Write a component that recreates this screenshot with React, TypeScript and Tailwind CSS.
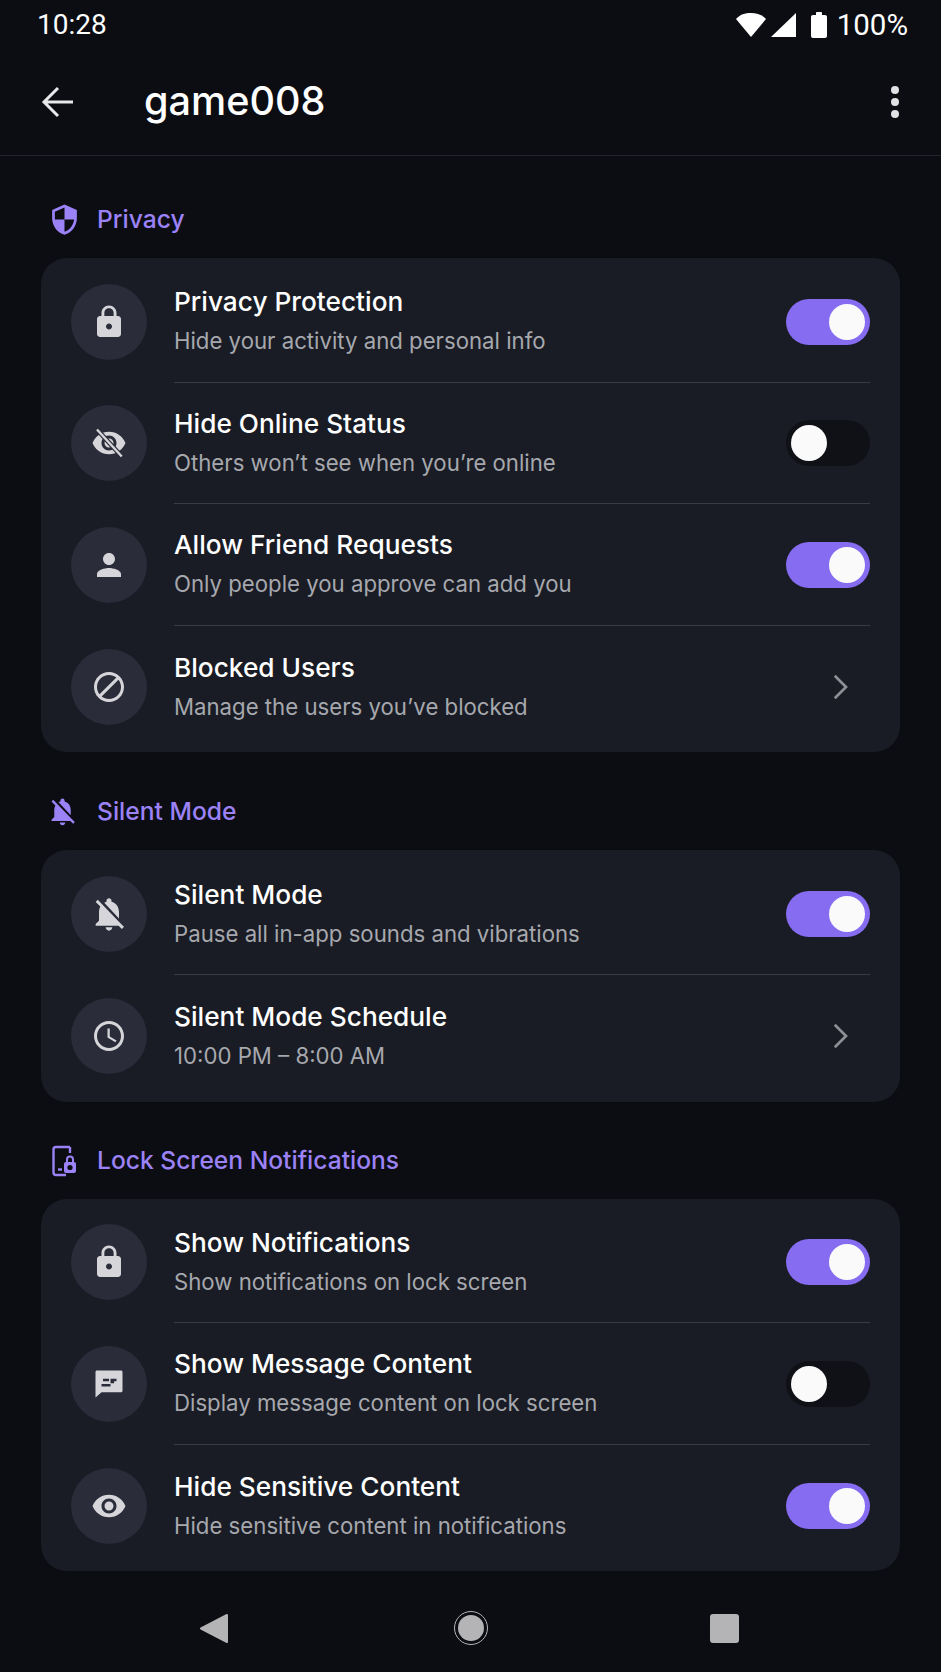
import React from 'react';

// Material icon paths (24x24 viewBox)
const PATHS = {
    lock: 'M18 8h-1V6c0-2.76-2.24-5-5-5S7 3.24 7 6v2H6c-1.1 0-2 .9-2 2v10c0 1.1.9 2 2 2h12c1.1 0 2-.9 2-2V10c0-1.1-.9-2-2-2zm-6 9c-1.1 0-2-.9-2-2s.9-2 2-2 2 .9 2 2-.9 2-2 2zm3.1-9H8.9V6c0-1.71 1.39-3.1 3.1-3.1 1.71 0 3.1 1.39 3.1 3.1v2z',
    eye: 'M12 4.5C7 4.5 2.73 7.61 1 12c1.73 4.39 6 7.5 11 7.5s9.27-3.11 11-7.5c-1.73-4.39-6-7.5-11-7.5zM12 17c-2.76 0-5-2.24-5-5s2.24-5 5-5 5 2.24 5 5-2.24 5-5 5zm0-8c-1.66 0-3 1.34-3 3s1.34 3 3 3 3-1.34 3-3-1.34-3-3-3z',
    person: 'M12 12c2.21 0 4-1.79 4-4s-1.79-4-4-4-4 1.79-4 4 1.79 4 4 4zm0 2c-2.67 0-8 1.34-8 4v2h16v-2c0-2.66-5.33-4-8-4z',
    block: 'M12 2C6.48 2 2 6.48 2 12s4.48 10 10 10 10-4.48 10-10S17.52 2 12 2zM4 12c0-4.42 3.58-8 8-8 1.85 0 3.55.63 4.9 1.69L5.69 16.9C4.63 15.55 4 13.85 4 12zm8 8c-1.85 0-3.55-.63-4.9-1.69L18.31 7.1C19.37 8.45 20 10.15 20 12c0 4.42-3.58 8-8 8z',
    bellOff: 'M20 18.69L7.84 6.14 5.27 3.49 4 4.76l2.8 2.8v.01c-.52.99-.8 2.16-.8 3.42v5l-2 2v1h13.73l2 2L21 19.72l-1-1.03zM12 22c1.11 0 2-.89 2-2h-4c0 1.11.89 2 2 2zm6-7.32V11c0-3.08-1.64-5.64-4.5-6.32V4c0-.83-.67-1.5-1.5-1.5s-1.5.67-1.5 1.5v.68c-.15.03-.29.08-.42.12-.1.03-.2.07-.3.11h-.01c-.2.08-.4.17-.59.27-.01 0-.01 0-.02.01L18 14.68z',
    clock: 'M11.99 2C6.47 2 2 6.48 2 12s4.47 10 9.99 10C17.52 22 22 17.52 22 12S17.52 2 11.99 2zM12 20c-4.42 0-8-3.58-8-8s3.58-8 8-8 8 3.58 8 8-3.58 8-8 8zm.5-13H11v6l5.25 3.15.75-1.23-4.5-2.67z',
    shield: 'M12 1L3 5v6c0 5.55 3.84 10.74 9 12 5.16-1.26 9-6.45 9-12V5l-9-4zm0 10.99h7c-.53 4.12-3.28 7.79-7 8.94V12H5V6.3l7-3.11v8.8z',
};

type IconName = keyof typeof PATHS | 'eyeOff' | 'chat';

const RowIcon = ({ name }: { name: IconName }) => {
    if (name === 'eyeOff') {
        return (
            <svg viewBox="0 0 24 24" className="w-[36px] h-[36px] text-[#d6d6da]" fill="currentColor">
                <path d={PATHS.eye} />
                <path d="M4 3 L20.5 21" stroke="#2a2c3a" strokeWidth="3.2" />
                <path d="M4 3 L20.5 21" stroke="currentColor" strokeWidth="1.6" />
            </svg>
        );
    }
    if (name === 'chat') {
        return (
            <svg viewBox="0 0 24 24" className="w-[36px] h-[36px] text-[#d6d6da]" fill="currentColor">
                <path d="M20 3H4c-.6 0-1 .4-1 1v17l4-3.5h13c.6 0 1-.4 1-1V4c0-.6-.4-1-1-1z" />
                <path d="M8 8.5h4v1.6H8zM13 8.5h4v1.6h-1.6v1.4H13zM7 12h6v1.6H7z" fill="#2a2c3a" />
            </svg>
        );
    }
    return (
        <svg viewBox="0 0 24 24" className={`${name === 'bellOff' ? 'w-[40px] h-[40px]' : 'w-[36px] h-[36px]'} text-[#d6d6da]`} fill="currentColor">
            <path d={PATHS[name]} />
        </svg>
    );
};

const Toggle = ({ on }: { on: boolean }) => (
    <div className={`w-[84px] h-[46px] rounded-full flex items-center px-[5px] shrink-0 ${on ? 'bg-[#866cf0] justify-end' : 'bg-[#101116] justify-start'}`}>
        <div className="w-[36px] h-[36px] rounded-full bg-[#fafafa]" />
    </div>
);

const Chevron = () => (
    <svg viewBox="0 0 24 24" className="w-[36px] h-[36px] mr-[12px] shrink-0 text-[#8e9097]" fill="none" stroke="currentColor" strokeWidth="1.8">
        <path d="M8.5 4.5 L16 12 L8.5 19.5" />
    </svg>
);

interface RowData {
    icon: IconName;
    title: string;
    sub: string;
    toggle?: boolean;
}

const Row = ({ row, last }: { row: RowData; last: boolean }) => (
    <div className="flex items-center h-[121.6px] pl-[30px] pr-[30px]">
        <div className="w-[76px] h-[76px] rounded-full bg-[#2a2c3a] flex items-center justify-center shrink-0">
            <RowIcon name={row.icon} />
        </div>
        <div className={`flex-1 h-full ml-[27px] pt-[1px] flex items-center justify-between ${last ? '' : 'border-b border-[#3a3c45]'}`}>
            <div className="flex flex-col pb-[2px]">
                <div className="text-[26.25px] leading-[36px] font-medium text-white">{row.title}</div>
                <div className="text-[22.2px] leading-[32px] mt-[5px] text-[#a6a8ae]">{row.sub}</div>
            </div>
            {row.toggle === undefined ? <Chevron /> : <Toggle on={row.toggle} />}
        </div>
    </div>
);

const Section = ({ icon, title, rows, className, head, bottom }: { icon: React.ReactNode; title: string; rows: RowData[]; className: string; head: string; bottom: string }) => (
    <section className={className}>
        <div className={`flex items-center h-[40px] ${head}`}>
            <div className="w-[56px] pl-[8px] flex items-center">{icon}</div>
            <div className="text-[24.6px] font-medium text-[#9b82f6]">{title}</div>
        </div>
        <div className={`bg-[#191c24] rounded-[26px] pt-[3px] ${bottom}`}>
            {rows.map((row, i) => (
                <Row key={row.title} row={row} last={i === rows.length - 1} />
            ))}
        </div>
    </section>
);

const PRIVACY: RowData[] = [
    { icon: 'lock', title: 'Privacy Protection', sub: 'Hide your activity and personal info', toggle: true },
    { icon: 'eyeOff', title: 'Hide Online Status', sub: 'Others won’t see when you’re online', toggle: false },
    { icon: 'person', title: 'Allow Friend Requests', sub: 'Only people you approve can add you', toggle: true },
    { icon: 'block', title: 'Blocked Users', sub: 'Manage the users you’ve blocked' },
];

const SILENT: RowData[] = [
    { icon: 'bellOff', title: 'Silent Mode', sub: 'Pause all in-app sounds and vibrations', toggle: true },
    { icon: 'clock', title: 'Silent Mode Schedule', sub: '10:00 PM – 8:00 AM' },
];

const LOCK: RowData[] = [
    { icon: 'lock', title: 'Show Notifications', sub: 'Show notifications on lock screen', toggle: true },
    { icon: 'chat', title: 'Show Message Content', sub: 'Display message content on lock screen', toggle: false },
    { icon: 'eye', title: 'Hide Sensitive Content', sub: 'Hide sensitive content in notifications', toggle: true },
];

export default function App() {
    return (
        <div className="w-[941px] h-[1672px] bg-[#0b0d12] flex flex-col overflow-hidden font-['Inter',sans-serif]">
            {/* status bar */}
            <div className="h-[50px] flex items-center justify-between pl-[37px] pr-[33px] text-white text-[28px] font-['Roboto',sans-serif]">
                <span>10:28</span>
                <div className="flex items-center">
                    <svg viewBox="0 0 30 24" className="w-[30px] h-[24px]" fill="white">
                        <path d="M0 6 C4 1.5 9 0 15 0 C21 0 26 1.5 30 6 L15 24 Z" />
                    </svg>
                    <svg viewBox="0 0 25 24" className="w-[25px] h-[24px] ml-[5px]" fill="white">
                        <path d="M25 0 V24 H0 Z" />
                    </svg>
                    <svg viewBox="0 0 16 26" className="w-[16px] h-[26px] ml-[15px]" fill="white">
                        <path d="M5 3 V1 C5 .4 5.4 0 6 0 H10 C10.6 0 11 .4 11 1 V3 H14 C15.2 3 16 3.8 16 5 V24 C16 25.2 15.2 26 14 26 H2 C.8 26 0 25.2 0 24 V5 C0 3.8 .8 3 2 3 Z" />
                    </svg>
                    <span className="ml-[10px] text-[29.5px]">100%</span>
                </div>
            </div>

            {/* app bar */}
            <div className="h-[106px] flex items-center border-b border-[#23252c] pl-[41px] pr-[42px] pb-[2px]">
                <svg viewBox="0 0 34 34" className="w-[34px] h-[34px] text-[#e8e8ea]" fill="none" stroke="currentColor" strokeWidth="3">
                    <path d="M32 17 H4 M17 3 L3 17 L17 31" />
                </svg>
                <div className="ml-[69px] text-[39.6px] font-medium text-white flex-1">game008</div>
                <div className="flex flex-col gap-[4px]">
                    <div className="w-[8px] h-[8px] rounded-full bg-[#e2e2e4]" />
                    <div className="w-[8px] h-[8px] rounded-full bg-[#e2e2e4]" />
                    <div className="w-[8px] h-[8px] rounded-full bg-[#e2e2e4]" />
                </div>
            </div>

            <main className="flex-1 px-[41px]">
                <Section
                    className="mt-[43px]"
                    head="mb-[19px]"
                    bottom="pb-[5px]"
                    title="Privacy"
                    rows={PRIVACY}
                    icon={
                        <svg viewBox="0 0 24 24" className="w-[33px] h-[33px] -ml-[1px] text-[#9b82f6]" fill="currentColor">
                            <path d={PATHS.shield} />
                        </svg>
                    }
                />
                <Section
                    className="mt-[39px]"
                    head="mb-[19px]"
                    bottom="pb-[5px]"
                    title="Silent Mode"
                    rows={SILENT}
                    icon={
                        <svg viewBox="0 0 24 24" className="w-[33px] h-[33px] -ml-[3px] text-[#9b82f6]" fill="currentColor">
                            <path d={PATHS.bellOff} />
                        </svg>
                    }
                />
                <Section
                    className="mt-[39px]"
                    head="mb-[18px]"
                    bottom="pb-[4.5px]"
                    title="Lock Screen Notifications"
                    rows={LOCK}
                    icon={
                        <svg viewBox="0 0 28 32" className="w-[28px] h-[32px] ml-[2px] text-[#9b82f6]" fill="none" stroke="currentColor" strokeWidth="2.4">
                            <path d="M19 2 H5 C3.5 2 2.5 3 2.5 4.5 V27.5 C2.5 29 3.5 30 5 30 H15" />
                            <path d="M19 2 V8" />
                            <path d="M7 24.5 H11" />
                            <rect x="13" y="17" width="12" height="11" rx="2" fill="currentColor" stroke="none" />
                            <path d="M16 17 V14.5 C16 10.5 22 10.5 22 14.5 V17" strokeWidth="2" />
                            <circle cx="19" cy="22.5" r="2.6" fill="#0b0d12" stroke="none" />
                        </svg>
                    }
                />
            </main>

            {/* nav bar */}
            <div className="h-[101px] relative flex items-center justify-between pl-[200px] pr-[202px] pt-[13px] text-[#b4b4b6]">
                <svg viewBox="0 0 28 31" className="w-[28px] h-[31px]" fill="currentColor" stroke="currentColor" strokeWidth="2" strokeLinejoin="round">
                    <path d="M27 2 V29 L1 15.5 Z" />
                </svg>
                <div className="w-[34px] h-[34px] ml-[3px] rounded-full border-[1.5px] border-[#b4b4b6] flex items-center justify-center">
                    <div className="w-[26px] h-[26px] rounded-full bg-[#b4b4b6]" />
                </div>
                <div className="w-[29px] h-[29px] rounded-[3px] bg-[#b4b4b6]" />
            </div>
        </div>
    );
}
